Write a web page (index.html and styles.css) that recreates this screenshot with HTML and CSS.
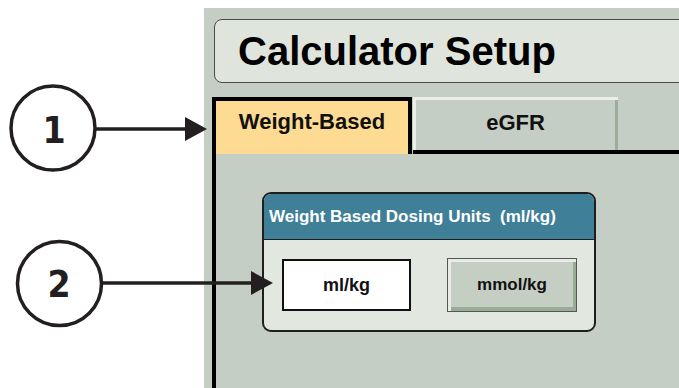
FILE: index.html
```html
<!DOCTYPE HTML>
<html>
    <head>
        <meta http-equiv="Content-Type" content="text/html;charset=UTF-8">
        <title>Calculator Setup</title>
        <link rel="stylesheet" href="styles.css">
    </head>
<body>
<div id="panel">
    <div class="title">Calculator Setup</div>
    <div class="tabs">
        <div class="tab active">Weight-Based</div>
        <div class="tab">eGFR</div>
        <div class="tab-rest"></div>
    </div>
    <div class="tab-body">
        <div class="group">
            <div class="group-head">Weight Based Dosing Units&nbsp; (ml/kg)</div>
            <div class="group-body">
                <button class="unit selected">ml/kg</button>
                <button class="unit">mmol/kg</button>
            </div>
        </div>
    </div>
</div>
<svg class="callouts" width="679" height="388" viewBox="0 0 679 388">
    <circle cx="53" cy="128" r="42" />
    <text x="54" y="130">1</text>
    <line x1="95" y1="129" x2="187" y2="129" />
    <polygon points="185,117 207,129 185,141" />

    <circle cx="59.5" cy="283.5" r="42" />
    <text x="59" y="284">2</text>
    <line x1="101" y1="283" x2="253" y2="283" />
    <polygon points="251,271 273,283 251,295" />
</svg>
</body>
</html>
```

FILE: styles.css
```css
body {
    margin: 0;
    width: 679px;
    height: 388px;
    overflow: hidden;
    background: #fff;
    font-family: "Liberation Sans", Arial, sans-serif;
    font-weight: bold;
    color: #111;
}
#panel {
    margin: 8px 0 0 204px;
    height: 380px;
    background: #c5cec4;
    display: flex;
    flex-direction: column;
    overflow: hidden;
}
.title {
    margin: 11px -20px 0 10px;
    height: 62px;
    border: 1px solid #4a4a4a;
    border-radius: 8px;
    background: #dfe4dc;
    font-size: 40px;
    padding-left: 23px;
    display: flex;
    align-items: center;
    color: #000;
}
.tabs {
    margin: 14px 0 0 8px;
    display: flex;
    align-items: flex-end;
    font-size: 22px;
}
.tab {
    box-sizing: border-box;
    text-align: center;
}
.tab.active {
    width: 200px;
    height: 57px;
    border: 4px solid #000;
    border-bottom: none;
    background: #fedb92;
    padding-top: 8px;
    line-height: 26px;
}
.tab:not(.active) {
    width: 205px;
    height: 57px;
    margin-left: 1px;
    border-bottom: 4px solid #000;
    box-shadow: inset 3px 3px 0 #eceee8, inset -3px 0 0 #9dac9b;
    padding-top: 13px;
    line-height: 26px;
}
.tab-rest {
    flex: 1;
    border-bottom: 4px solid #000;
}
.tab-body {
    flex: 1;
    margin-left: 8px;
    border-left: 4px solid #000;
    padding: 38px 0 0 46px;
}
.group {
    width: 330px;
    border: 2px solid #1e1e1e;
    border-radius: 9px;
    overflow: hidden;
    background: #e2e8df;
}
.group-head {
    height: 45px;
    background: #3f7f98;
    border-bottom: 1px solid #1e1e1e;
    color: #fff;
    font-size: 17px;
    padding-left: 5px;
    display: flex;
    align-items: center;
}
.group-body {
    display: flex;
    align-items: center;
    gap: 36px;
    padding: 18px 17px 18px 18px;
}
.unit {
    font: bold 17px "Liberation Sans", Arial, sans-serif;
    color: #111;
    width: 130px;
    height: 54px;
    border: 1px solid #555;
    background: #c5cec3;
    box-shadow: inset 3px 3px 0 #e9ece6, inset -3px -4px 0 #9aab98;
    padding: 0;
}
.unit.selected {
    width: 129px;
    height: 52px;
    font-size: 18px;
    border: 2px solid #111;
    background: #fff;
    box-shadow: none;
}
.callouts {
    position: absolute;
    left: 0;
    top: 0;
}
.callouts circle {
    fill: none;
    stroke: #231f20;
    stroke-width: 3.5;
}
.callouts line {
    stroke: #231f20;
    stroke-width: 3.5;
}
.callouts polygon {
    fill: #231f20;
}
.callouts text {
    font-family: "Liberation Sans Narrow", "DejaVu Sans Condensed", sans-serif;
    font-weight: bold;
    font-size: 37px;
    fill: #231f20;
    text-anchor: middle;
    dominant-baseline: central;
}
```
